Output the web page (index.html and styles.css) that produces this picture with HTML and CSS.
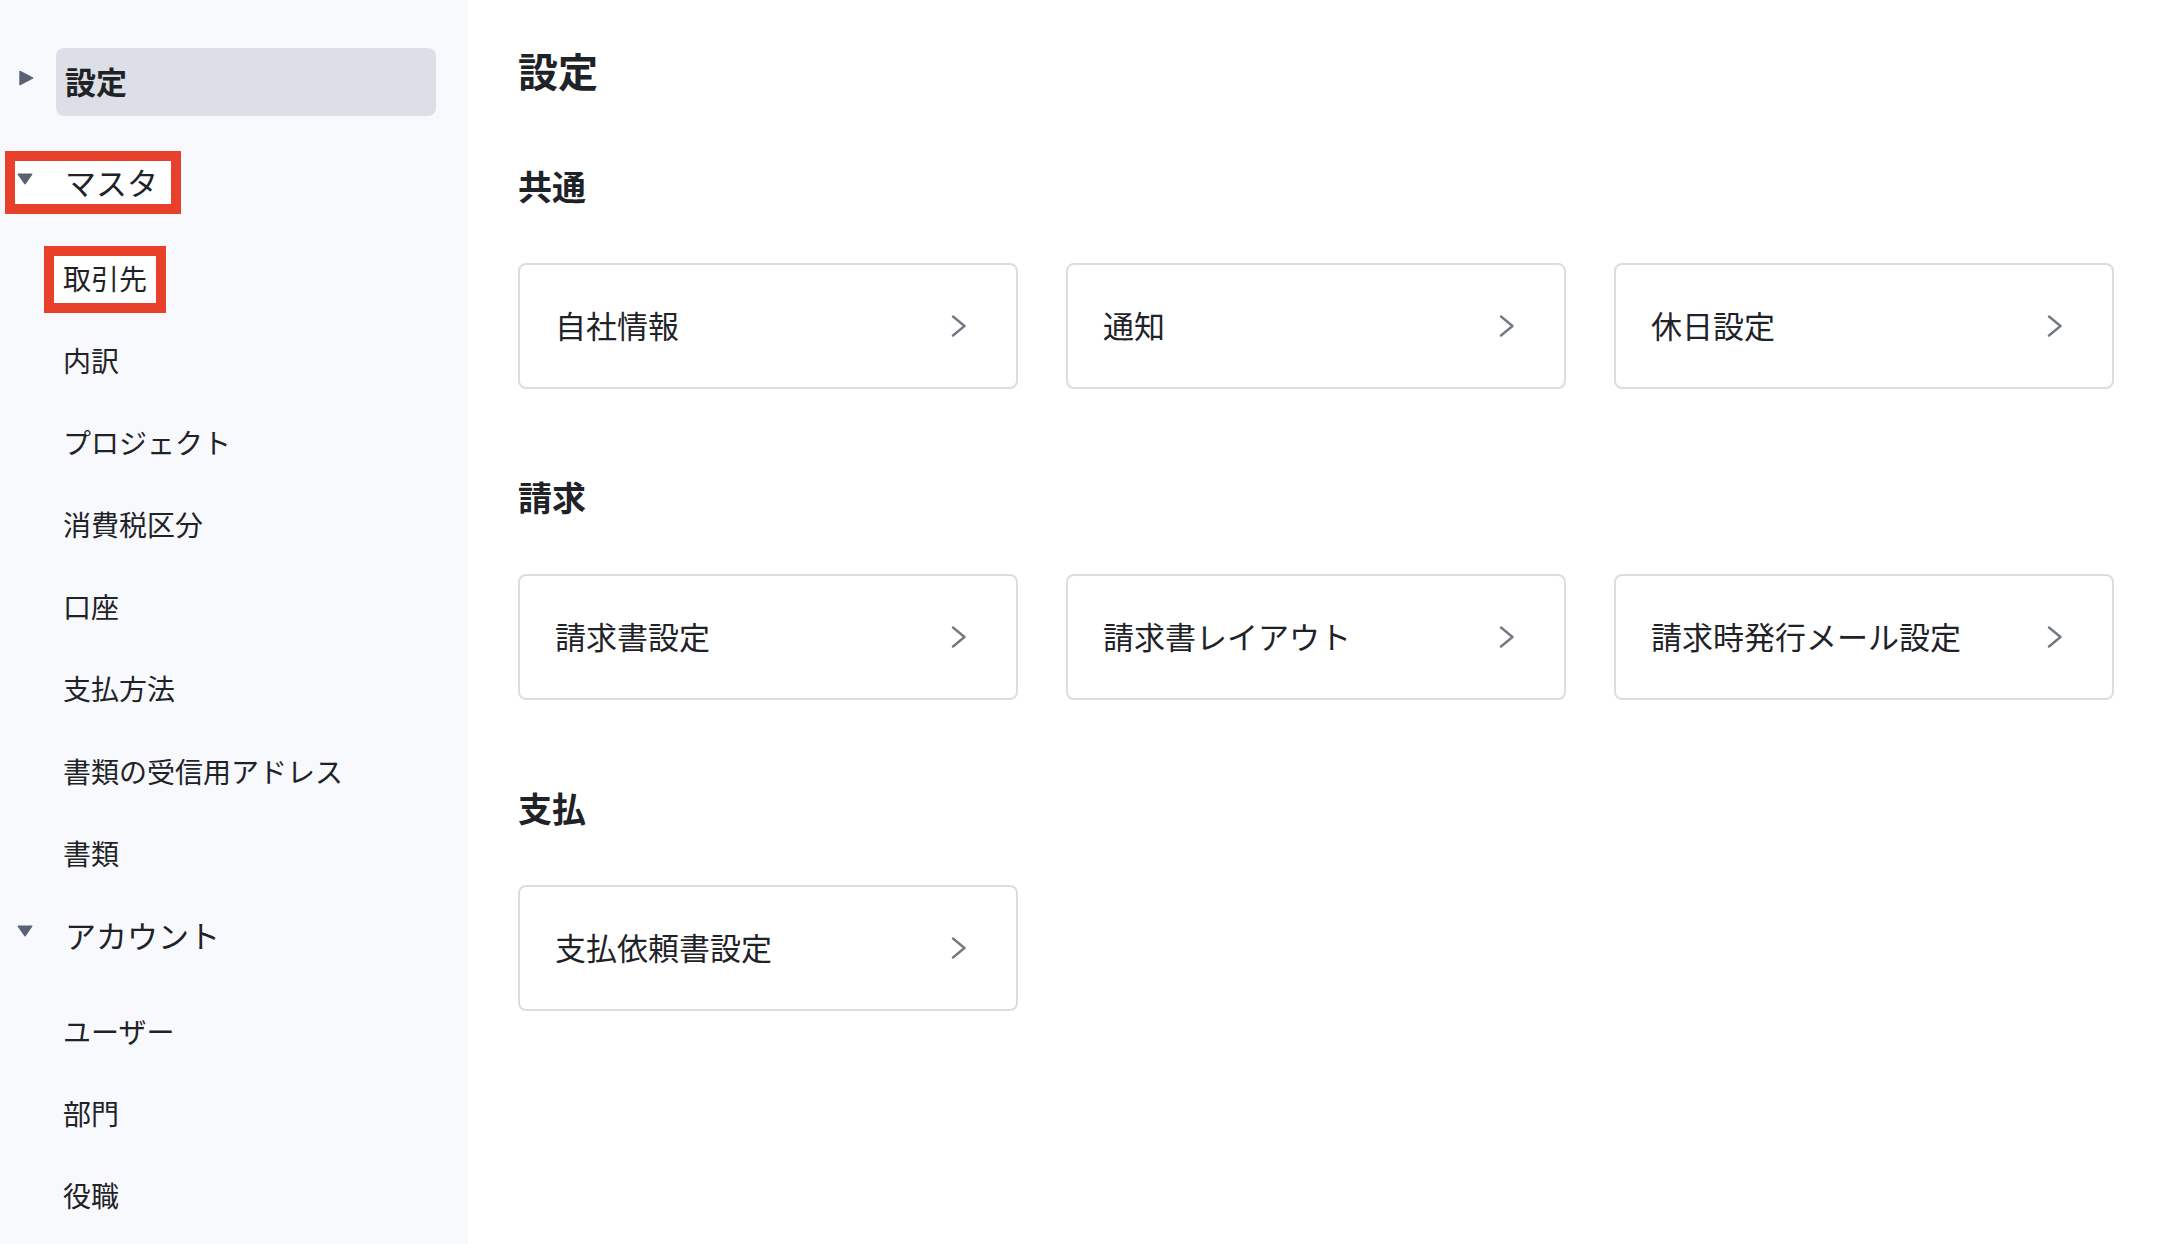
FILE: index.html
```html
<!DOCTYPE html>
<html lang="ja">
<head>
<meta charset="utf-8">
<title>設定</title>
<link rel="stylesheet" href="styles.css">
</head>
<body>
<div class="app">
  <nav class="sidebar">
    <div class="group-head">
      <svg class="caret caret-right" width="16" height="16" viewBox="0 0 16 16"><path d="M2 1.4 L14.8 8 L2 14.6 Z" fill="currentColor" stroke="currentColor" stroke-width="1.4" stroke-linejoin="round"/></svg>
      <span class="label pill">設定</span>
    </div>

    <div class="group-head gap-top">
      <span class="head-inner annot">
        <svg class="caret caret-down" width="16" height="12" viewBox="0 0 16 12"><path d="M1.2 1.2 L14.8 1.2 L8 10.8 Z" fill="currentColor" stroke="currentColor" stroke-width="1.4" stroke-linejoin="round"/></svg>
        <span class="label">マスタ</span>
      </span>
    </div>
    <ul class="items">
      <li><span class="item annot">取引先</span></li>
      <li><span class="item">内訳</span></li>
      <li><span class="item">プロジェクト</span></li>
      <li><span class="item">消費税区分</span></li>
      <li><span class="item">口座</span></li>
      <li><span class="item">支払方法</span></li>
      <li><span class="item">書類の受信用アドレス</span></li>
      <li><span class="item">書類</span></li>
    </ul>

    <div class="group-head gap-top-small">
      <span class="head-inner">
        <svg class="caret caret-down" width="16" height="12" viewBox="0 0 16 12"><path d="M1.2 1.2 L14.8 1.2 L8 10.8 Z" fill="currentColor" stroke="currentColor" stroke-width="1.4" stroke-linejoin="round"/></svg>
        <span class="label">アカウント</span>
      </span>
    </div>
    <ul class="items">
      <li><span class="item">ユーザー</span></li>
      <li><span class="item">部門</span></li>
      <li><span class="item">役職</span></li>
    </ul>
  </nav>

  <main class="main">
    <h1 class="page-title">設定</h1>

    <section class="section">
      <h2 class="section-title">共通</h2>
      <div class="cards">
        <a class="card"><span class="card-text">自社情報</span><svg class="chev" width="16" height="22" viewBox="0 0 16 22"><path d="M2 1.5 L13.5 11 L2 20.5" fill="none" stroke="currentColor" stroke-width="2.4" stroke-linecap="round" stroke-linejoin="round"/></svg></a>
        <a class="card"><span class="card-text">通知</span><svg class="chev" width="16" height="22" viewBox="0 0 16 22"><path d="M2 1.5 L13.5 11 L2 20.5" fill="none" stroke="currentColor" stroke-width="2.4" stroke-linecap="round" stroke-linejoin="round"/></svg></a>
        <a class="card"><span class="card-text">休日設定</span><svg class="chev" width="16" height="22" viewBox="0 0 16 22"><path d="M2 1.5 L13.5 11 L2 20.5" fill="none" stroke="currentColor" stroke-width="2.4" stroke-linecap="round" stroke-linejoin="round"/></svg></a>
      </div>
    </section>

    <section class="section">
      <h2 class="section-title">請求</h2>
      <div class="cards">
        <a class="card"><span class="card-text">請求書設定</span><svg class="chev" width="16" height="22" viewBox="0 0 16 22"><path d="M2 1.5 L13.5 11 L2 20.5" fill="none" stroke="currentColor" stroke-width="2.4" stroke-linecap="round" stroke-linejoin="round"/></svg></a>
        <a class="card"><span class="card-text">請求書レイアウト</span><svg class="chev" width="16" height="22" viewBox="0 0 16 22"><path d="M2 1.5 L13.5 11 L2 20.5" fill="none" stroke="currentColor" stroke-width="2.4" stroke-linecap="round" stroke-linejoin="round"/></svg></a>
        <a class="card"><span class="card-text">請求時発行メール設定</span><svg class="chev" width="16" height="22" viewBox="0 0 16 22"><path d="M2 1.5 L13.5 11 L2 20.5" fill="none" stroke="currentColor" stroke-width="2.4" stroke-linecap="round" stroke-linejoin="round"/></svg></a>
      </div>
    </section>

    <section class="section">
      <h2 class="section-title">支払</h2>
      <div class="cards">
        <a class="card"><span class="card-text">支払依頼書設定</span><svg class="chev" width="16" height="22" viewBox="0 0 16 22"><path d="M2 1.5 L13.5 11 L2 20.5" fill="none" stroke="currentColor" stroke-width="2.4" stroke-linecap="round" stroke-linejoin="round"/></svg></a>
      </div>
    </section>
  </main>
</div>
</body>
</html>
```

FILE: styles.css
```css
* { box-sizing: border-box; }

html, body {
  margin: 0;
  padding: 0;
  height: 100%;
}

body {
  font-family: "Noto Sans CJK JP", "Noto Sans", sans-serif;
  color: #1f2328;
  background: #ffffff;
}

.app {
  display: flex;
  min-height: 100vh;
}

/* ---------- Sidebar ---------- */
.sidebar {
  width: 468px;
  flex: none;
  background: #f7f9fc;
  padding-top: 48px;
  padding-right: 32px;
}

.group-head {
  display: flex;
  align-items: center;
  padding-left: 15px;
}

.gap-top { margin-top: 45px; }
.gap-top-small { margin-top: 36px; }

.head-inner {
  display: inline-flex;
  align-items: center;
  height: 43px;
  padding-right: 4px;
}

.caret {
  flex: none;
  color: #5a6373;
  margin-left: 2px;
  margin-right: 23px;
  margin-bottom: 8px;
}

.caret-right {
  margin-left: 3px;
  margin-right: 22px;
}

.label {
  font-size: 31px;
  line-height: 41px;
  padding: 0 9px 2px;
  white-space: nowrap;
}

.pill {
  flex: 1;
  height: 68px;
  line-height: 66px;
  background: #dcdfe6;
  border-radius: 8px;
  font-weight: 700;
}

.items {
  list-style: none;
  margin: 52px 0 0 0;
  padding: 0 0 0 54px;
  display: flex;
  flex-direction: column;
  gap: 35.1px;
}

.item {
  display: inline-block;
  height: 47px;
  line-height: 45px;
  padding: 0 9px 2px;
  font-size: 28px;
  white-space: nowrap;
}

.annot {
  background: #ffffff;
  outline: 10px solid #e8402a;
}

/* ---------- Main ---------- */
.main {
  flex: 1;
  padding: 40px 60px 0 50px;
}

.page-title {
  margin: 0;
  font-size: 40px;
  line-height: 60px;
  font-weight: 700;
}

.section {
  margin-top: 82px;
}

.section:first-of-type {
  margin-top: 59.5px;
}

.section-title {
  margin: 0 0 52px 0;
  font-size: 34px;
  line-height: 51px;
  font-weight: 700;
}

.cards {
  display: grid;
  grid-template-columns: repeat(3, 1fr);
  gap: 48px;
}

.card {
  display: flex;
  align-items: center;
  justify-content: space-between;
  height: 126px;
  padding: 0 49px 2px 35px;
  border: 2px solid #dadde2;
  border-radius: 8px;
  background: #ffffff;
  color: #1f2328;
  text-decoration: none;
}

.card-text {
  font-size: 31px;
  line-height: 46px;
  white-space: nowrap;
}

.chev {
  flex: none;
  color: #737a84;
  margin-top: 2px;
}
```
